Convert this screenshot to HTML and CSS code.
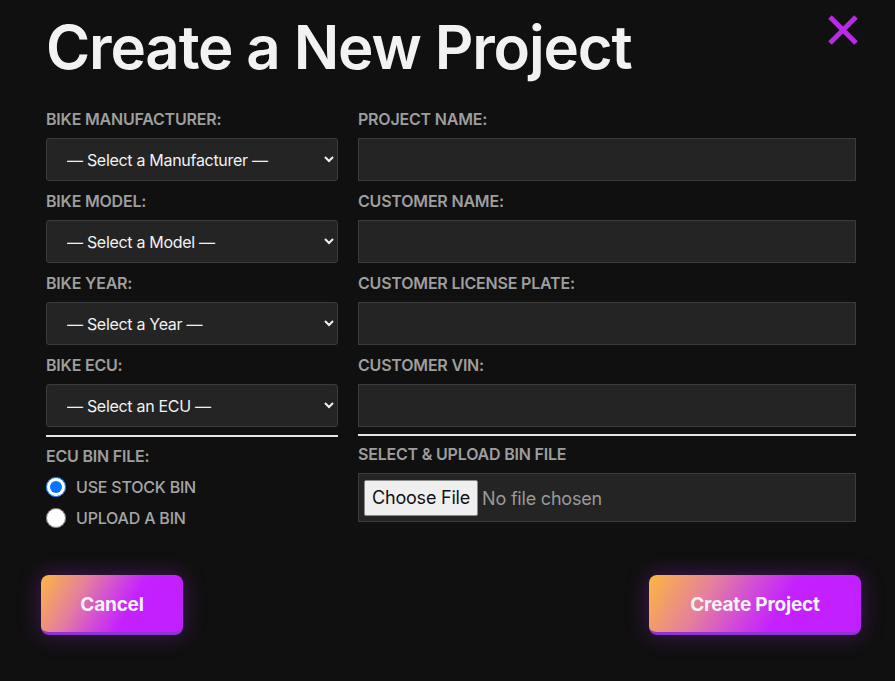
FILE: index.html
```html
<!DOCTYPE html>
<html lang="en">
<head>
<meta charset="utf-8">
<title>Create a New Project</title>
<link rel="stylesheet" href="styles.css">
</head>
<body>
<div class="page">
  <header class="header">
    <h1 class="title">Create a New Project</h1>
    <button class="close" aria-label="Close">
      <svg width="32" height="32" viewBox="0 0 32 32"><path d="M3 3 L29 29 M29 3 L3 29" stroke="#b82ae6" stroke-width="5" stroke-linecap="butt"/></svg>
    </button>
  </header>
  <div class="form">
    <div class="col col-left">
      <label class="label">BIKE MANUFACTURER:</label>
      <select class="field select"><option>— Select a Manufacturer —</option></select>
      <label class="label">BIKE MODEL:</label>
      <select class="field select"><option>— Select a Model —</option></select>
      <label class="label">BIKE YEAR:</label>
      <select class="field select"><option>— Select a Year —</option></select>
      <label class="label">BIKE ECU:</label>
      <select class="field select"><option>— Select an ECU —</option></select>
      <hr class="rule">
      <label class="label label-after">ECU BIN FILE:</label>
      <div class="radios">
        <label class="radio"><input type="radio" name="bin" checked><span>USE STOCK BIN</span></label>
        <label class="radio"><input type="radio" name="bin"><span>UPLOAD A BIN</span></label>
      </div>
    </div>
    <div class="col col-right">
      <label class="label">PROJECT NAME:</label>
      <input class="field" type="text">
      <label class="label">CUSTOMER NAME:</label>
      <input class="field" type="text">
      <label class="label">CUSTOMER LICENSE PLATE:</label>
      <input class="field" type="text">
      <label class="label">CUSTOMER VIN:</label>
      <input class="field" type="text">
      <hr class="rule rule-right">
      <label class="label label-after label-file">SELECT &amp; UPLOAD BIN FILE</label>
      <div class="filebox"><input class="file" type="file"></div>
    </div>
  </div>
  <footer class="footer">
    <button class="btn btn-cancel">Cancel</button>
    <button class="btn btn-create">Create Project</button>
  </footer>
</div>
</body>
</html>
```
FILE: styles.css
```css
* { box-sizing: border-box; }
html, body { margin: 0; padding: 0; background: #101010; }
body { font-family: Inter, "Liberation Sans", sans-serif; color: #f0f0f0; }
.page { width: 895px; height: 681px; padding: 0 39px 0 46px; overflow: hidden; }
.header { display: flex; justify-content: space-between; align-items: flex-start; }
.title { margin: 17px 0 0 0; font-size: 60px; line-height: 60px; font-weight: 600; letter-spacing: -1.15px; color: #f2f2f2; }
.close { margin: 14px -3px 0 0; padding: 0; border: 0; background: none; width: 32px; height: 32px; display: block; }
.close svg { display: block; }
.form { display: flex; gap: 20px; margin-top: 32px; }
.col { display: flex; flex-direction: column; }
.col-left { width: 292px; }
.col-right { width: 498px; }
.label { display: block; font-size: 16px; line-height: 20px; font-weight: 600; color: #9e9e9e; letter-spacing: -0.2px; margin-bottom: 9px; }
.field { display: block; width: 100%; height: 43px; margin: 0 0 10px 0; background: #242424; border: 1px solid #3c3c3c; border-radius: 0; color: #f2f2f2; font-family: inherit; }
.select { font-size: 16px; padding: 0 8px 0 16px; color-scheme: dark; letter-spacing: -0.3px; border-radius: 3px; }
.rule { margin: -2px 0 0 0; border: 0; height: 2px; background: #e6e6e6; }
.rule-right { margin-top: -3px; }
.label-after { margin-top: 9px; margin-bottom: 10px; }
.label-file { margin-top: 8px; margin-bottom: 9px; }
.radios { display: flex; flex-direction: column; gap: 11px; margin-top: 1px; }
.radio { display: flex; align-items: center; gap: 10px; font-size: 16px; font-weight: 500; color: #a6a6a6; letter-spacing: -0.2px; }
.radio input { width: 20px; height: 20px; margin: 0; }
.filebox { height: 49px; background: #242424; border: 1px solid #3c3c3c; display: flex; align-items: center; padding: 0 5px; }
.file { color: #9a9a9a; font-family: inherit; font-size: 18px; letter-spacing: -0.2px; }
.file::file-selector-button { font-family: inherit; font-size: 18px; color: #111; background: #efefef; border: 1px solid #8a8a8a; border-radius: 2px; height: 36px; padding: 0 7px; margin-right: 4px; letter-spacing: -0.2px; }
.footer { display: flex; justify-content: space-between; margin: 47px -5px 0 -5px; }
.btn { height: 60px; border: 0; border-bottom: 3px solid #8e33d4; border-radius: 8px; padding: 1px 0 0 0; color: #f4f4f4; font-family: inherit; font-weight: 700; font-size: 19px; letter-spacing: -0.2px; background: linear-gradient(120deg, #fdb641 0%, #e57f9c 28%, #d24ed4 45%, #c520ff 62%, #c01fff 100%); box-shadow: 0 0 22px rgba(170, 40, 220, 0.35); }
.btn-cancel { width: 142px; }
.btn-create { width: 212px; }
```
